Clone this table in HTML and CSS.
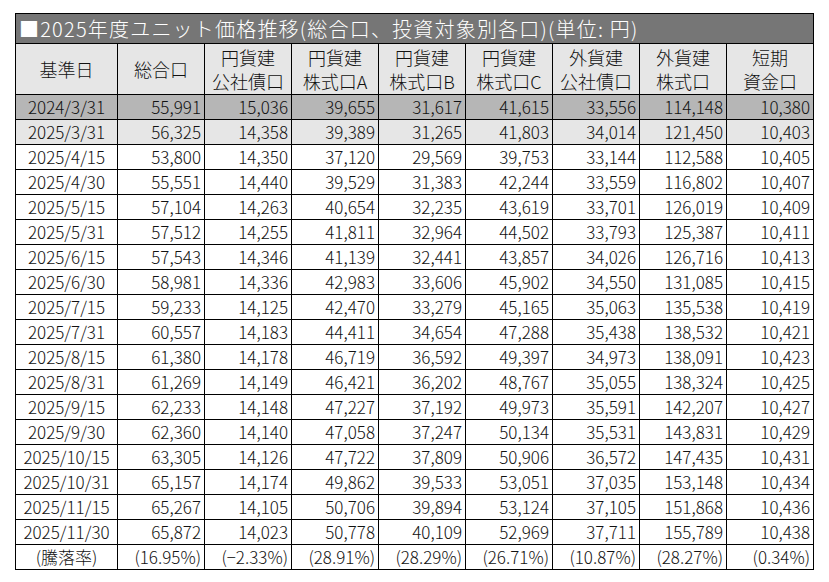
FILE: index.html
```html
<!DOCTYPE html>
<html lang="ja">
<head>
<meta charset="utf-8">
<link rel="stylesheet" href="styles.css">
</head>
<body>
<div class="wrap">
<table class="grid">
<colgroup>
<col class="c-date"><col class="c-num"><col class="c-num"><col class="c-num"><col class="c-num"><col class="c-num"><col class="c-num"><col class="c-num"><col class="c-num">
</colgroup>
<thead>
<tr class="title-row"><th colspan="9" class="title">■2025年度ユニット価格推移(総合口、投資対象別各口)(単位: 円)</th></tr>
<tr class="head-row">
<th>基準日</th>
<th>総合口</th>
<th>円貨建<br>公社債口</th>
<th>円貨建<br>株式口A</th>
<th>円貨建<br>株式口B</th>
<th>円貨建<br>株式口C</th>
<th>外貨建<br>公社債口</th>
<th>外貨建<br>株式口</th>
<th>短期<br>資金口</th>
</tr>
</thead>
<tbody>
<tr class="r-dark"><td class="d">2024/3/31</td><td>55,991</td><td>15,036</td><td>39,655</td><td>31,617</td><td>41,615</td><td>33,556</td><td>114,148</td><td>10,380</td></tr>
<tr class="r-light"><td class="d">2025/3/31</td><td>56,325</td><td>14,358</td><td>39,389</td><td>31,265</td><td>41,803</td><td>34,014</td><td>121,450</td><td>10,403</td></tr>
<tr><td class="d">2025/4/15</td><td>53,800</td><td>14,350</td><td>37,120</td><td>29,569</td><td>39,753</td><td>33,144</td><td>112,588</td><td>10,405</td></tr>
<tr><td class="d">2025/4/30</td><td>55,551</td><td>14,440</td><td>39,529</td><td>31,383</td><td>42,244</td><td>33,559</td><td>116,802</td><td>10,407</td></tr>
<tr><td class="d">2025/5/15</td><td>57,104</td><td>14,263</td><td>40,654</td><td>32,235</td><td>43,619</td><td>33,701</td><td>126,019</td><td>10,409</td></tr>
<tr><td class="d">2025/5/31</td><td>57,512</td><td>14,255</td><td>41,811</td><td>32,964</td><td>44,502</td><td>33,793</td><td>125,387</td><td>10,411</td></tr>
<tr><td class="d">2025/6/15</td><td>57,543</td><td>14,346</td><td>41,139</td><td>32,441</td><td>43,857</td><td>34,026</td><td>126,716</td><td>10,413</td></tr>
<tr><td class="d">2025/6/30</td><td>58,981</td><td>14,336</td><td>42,983</td><td>33,606</td><td>45,902</td><td>34,550</td><td>131,085</td><td>10,415</td></tr>
<tr><td class="d">2025/7/15</td><td>59,233</td><td>14,125</td><td>42,470</td><td>33,279</td><td>45,165</td><td>35,063</td><td>135,538</td><td>10,419</td></tr>
<tr><td class="d">2025/7/31</td><td>60,557</td><td>14,183</td><td>44,411</td><td>34,654</td><td>47,288</td><td>35,438</td><td>138,532</td><td>10,421</td></tr>
<tr><td class="d">2025/8/15</td><td>61,380</td><td>14,178</td><td>46,719</td><td>36,592</td><td>49,397</td><td>34,973</td><td>138,091</td><td>10,423</td></tr>
<tr><td class="d">2025/8/31</td><td>61,269</td><td>14,149</td><td>46,421</td><td>36,202</td><td>48,767</td><td>35,055</td><td>138,324</td><td>10,425</td></tr>
<tr><td class="d">2025/9/15</td><td>62,233</td><td>14,148</td><td>47,227</td><td>37,192</td><td>49,973</td><td>35,591</td><td>142,207</td><td>10,427</td></tr>
<tr><td class="d">2025/9/30</td><td>62,360</td><td>14,140</td><td>47,058</td><td>37,247</td><td>50,134</td><td>35,531</td><td>143,831</td><td>10,429</td></tr>
<tr><td class="d">2025/10/15</td><td>63,305</td><td>14,126</td><td>47,722</td><td>37,809</td><td>50,906</td><td>36,572</td><td>147,435</td><td>10,431</td></tr>
<tr><td class="d">2025/10/31</td><td>65,157</td><td>14,174</td><td>49,862</td><td>39,533</td><td>53,051</td><td>37,035</td><td>153,148</td><td>10,434</td></tr>
<tr><td class="d">2025/11/15</td><td>65,267</td><td>14,105</td><td>50,706</td><td>39,894</td><td>53,124</td><td>37,105</td><td>151,868</td><td>10,436</td></tr>
<tr><td class="d">2025/11/30</td><td>65,872</td><td>14,023</td><td>50,778</td><td>40,109</td><td>52,969</td><td>37,711</td><td>155,789</td><td>10,438</td></tr>
<tr class="r-rate"><td class="d">(騰落率)</td><td>(16.95%)</td><td>(−2.33%)</td><td>(28.91%)</td><td>(28.29%)</td><td>(26.71%)</td><td>(10.87%)</td><td>(28.27%)</td><td>(0.34%)</td></tr>
</tbody>
</table>
</div>
</body>
</html>
```

FILE: styles.css
```css
html, body {
  margin: 0;
  padding: 0;
  background: #ffffff;
}
.wrap {
  padding: 13px 0 0 15px;
}
.grid {
  border-collapse: collapse;
  table-layout: fixed;
  width: 799px;
  font-family: "Noto Sans CJK JP", "Noto Sans", sans-serif;
  font-size: 17px;
  font-weight: 300;
  color: #111111;
}
.c-date { width: 102px; }
.c-num { width: 87px; }
.grid th, .grid td {
  border: 1px solid #000000;
  padding: 0;
  font-weight: 300;
  white-space: nowrap;
  overflow: hidden;
}
.title-row th {
  height: 29px;
  background: #767676;
  color: #ffffff;
  text-align: left;
  font-size: 20px;
  letter-spacing: 1.2px;
  padding-left: 3px;
  line-height: 29px;
}
.head-row th {
  height: 50px;
  background: #e6e6e6;
  text-align: center;
  font-size: 18px;
  line-height: 24px;
  vertical-align: middle;
}
.grid td {
  height: 24px;
  line-height: 24px;
  text-align: right;
  padding-right: 3px;
}
.grid td.d {
  text-align: center;
  padding-right: 0;
}
.r-dark td { background: #b6b6b6; }
.r-light td { background: #e6e6e6; }
```
